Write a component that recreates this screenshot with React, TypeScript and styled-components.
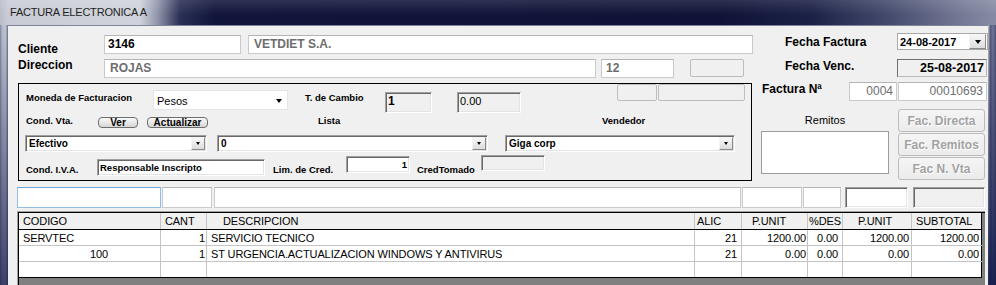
import React from 'react';
import styled, { createGlobalStyle } from 'styled-components';

const GlobalStyle = createGlobalStyle`
  html, body {
    margin: 0;
    padding: 0;
    background: #10143a;
  }
  * {
    box-sizing: border-box;
  }
`;

const Window = styled.div`
  width: 996px;
  height: 285px;
  display: flex;
  flex-direction: column;
  overflow: hidden;
  font-family: "Liberation Sans", Arial, sans-serif;
  color: #000;
`;

const TitleBar = styled.div`
  height: 25px;
  flex: none;
  display: flex;
  align-items: center;
  padding: 0 0 1px 10px;
  background:
    linear-gradient(180deg, rgba(255, 255, 255, 0.12) 0, rgba(255, 255, 255, 0) 60%),
    linear-gradient(90deg, #b9bdc9 0, #c9ccd5 8px, #d0d3db 140px, #8e93a9 158px, #2a2f55 180px,
      #11153b 215px, #0f1337 720px, #1b2046 810px, #454b6d 890px, #737994 960px, #868ca4 996px);
`;

const Title = styled.span`
  font-size: 11px;
  letter-spacing: -0.2px;
  color: #1e1e1e;
`;

const Frame = styled.div`
  flex: 1;
  display: flex;
  min-height: 0;
`;

const Edge = styled.div<{ $side: 'left' | 'right' }>`
  width: 8px;
  flex: none;
  background: ${p => p.$side === 'left'
    ? `linear-gradient(180deg, rgba(16, 22, 70, 0) 0, rgba(16, 22, 70, 0.75) 100%),
       linear-gradient(90deg, #7d849f 0, #b6bac8 2px, #c3c6d1 6px, #7b809a 7px, #7b809a 8px)`
    : `linear-gradient(180deg, rgba(16, 22, 70, 0.2) 0, rgba(16, 22, 70, 0.9) 100%),
       linear-gradient(90deg, #d8d8d8 0, #d8d8d8 1px, #5f6687 2px, #8990aa 5px, #5d6384 8px)`};
`;

const Content = styled.div`
  flex: 1;
  min-width: 0;
  display: flex;
  flex-direction: column;
  background: #f0f0f0;
  border-top: 1px solid #7f849a;
`;

const Top = styled.div`
  display: flex;
  flex: none;
  height: 155px;
`;

const LeftPane = styled.div`
  width: 745px;
  flex: none;
  padding-left: 10px;
  display: flex;
  flex-direction: column;
`;

const RightPane = styled.div`
  width: 235px;
  flex: none;
  display: flex;
  flex-direction: column;
`;

const Row = styled.div<{ $mt?: number; $h: number; $pl?: number }>`
  display: flex;
  align-items: flex-start;
  flex: none;
  height: ${p => p.$h}px;
  margin-top: ${p => p.$mt ?? 0}px;
  padding-left: ${p => p.$pl ?? 0}px;
`;

const Label = styled.div<{ $w?: number; $top?: number; $ml?: number; $small?: boolean }>`
  flex: none;
  width: ${p => (p.$w ? `${p.$w}px` : 'auto')};
  margin-top: ${p => p.$top ?? 0}px;
  margin-left: ${p => p.$ml ?? 0}px;
  font-size: ${p => (p.$small ? 9.5 : 12)}px;
  font-weight: bold;
  line-height: ${p => (p.$small ? 12 : 14)}px;
  white-space: nowrap;
`;

const TextBox = styled.div<{
  $w: number;
  $h: number;
  $ml?: number;
  $bold?: boolean;
  $dim?: boolean;
  $right?: boolean;
  $pl?: number;
  $focus?: boolean;
}>`
  flex: none;
  width: ${p => p.$w}px;
  height: ${p => p.$h}px;
  margin-left: ${p => p.$ml ?? 0}px;
  display: flex;
  align-items: center;
  justify-content: ${p => (p.$right ? 'flex-end' : 'flex-start')};
  padding: 0 ${p => (p.$right ? 3 : 0)}px 1px ${p => p.$pl ?? 3}px;
  background: #fff;
  border: 1px solid ${p => (p.$focus ? '#8fbde6' : '#cacaca')};
  border-top-color: ${p => (p.$focus ? '#6fa6da' : '#b4b4b4')};
  font-size: 12px;
  font-weight: ${p => (p.$bold ? 'bold' : 'normal')};
  color: ${p => (p.$dim ? '#6d6d6d' : '#000')};
  white-space: nowrap;
`;

const FlatBox = styled.div<{ $w: number; $h: number; $ml?: number | 'auto'; $mr?: number; $top?: number }>`
  flex: none;
  width: ${p => p.$w}px;
  height: ${p => p.$h}px;
  margin-left: ${p => (p.$ml === 'auto' ? 'auto' : `${p.$ml ?? 0}px`)};
  margin-right: ${p => p.$mr ?? 0}px;
  margin-top: ${p => p.$top ?? 0}px;
  background: #f0f0f0;
  border: 1px solid #bdbdbd;
  border-radius: 2px;
`;

const InsetBox = styled.div<{
  $w: number;
  $h: number;
  $ml?: number;
  $top?: number;
  $white?: boolean;
  $bold?: boolean;
  $size?: number;
  $right?: boolean;
  $soft?: boolean;
}>`
  flex: none;
  width: ${p => p.$w}px;
  height: ${p => p.$h}px;
  margin-left: ${p => p.$ml ?? 0}px;
  margin-top: ${p => p.$top ?? 0}px;
  display: flex;
  align-items: ${p => (p.$soft ? 'center' : 'flex-start')};
  justify-content: ${p => (p.$right ? 'flex-end' : 'flex-start')};
  padding: ${p => (p.$soft ? 0 : 1)}px 2px 0 2px;
  background: ${p => (p.$white ? '#fff' : '#f0f0f0')};
  border-style: solid;
  border-width: 1px;
  border-color: ${p => (p.$soft ? '#6e6e6e #b9b9b9 #b9b9b9 #6e6e6e' : '#a0a0a0 #fff #fff #a0a0a0')};
  box-shadow: ${p => (p.$soft ? 'none' : 'inset 1px 1px 0 #696969, inset -1px -1px 0 #e3e3e3')};
  font-size: ${p => p.$size ?? 12}px;
  font-weight: ${p => (p.$bold ? 'bold' : 'normal')};
  line-height: 14px;
  white-space: nowrap;
`;

const Caret = styled.span<{ $size?: number }>`
  flex: none;
  width: 0;
  height: 0;
  border-left: ${p => (p.$size ?? 7) / 2}px solid transparent;
  border-right: ${p => (p.$size ?? 7) / 2}px solid transparent;
  border-top: ${p => Math.round((p.$size ?? 7) * 0.58)}px solid #000;
`;

const Select = styled.div<{ $w: number; $h: number; $top?: number }>`
  flex: none;
  width: ${p => p.$w}px;
  height: ${p => p.$h}px;
  margin-top: ${p => p.$top ?? 0}px;
  display: flex;
  align-items: center;
  justify-content: space-between;
  padding: 2px 5px 0 3px;
  background: #fff;
  border: 1px solid #e4e4e4;
  font-size: 11px;
`;

const Combo = styled.div<{ $w: number; $ml?: number; $top?: number }>`
  flex: none;
  width: ${p => p.$w}px;
  height: 17px;
  margin-left: ${p => p.$ml ?? 0}px;
  margin-top: ${p => p.$top ?? 0}px;
  display: flex;
  align-items: center;
  padding-left: 3px;
  background: #fff;
  border-style: solid;
  border-width: 1px;
  border-color: #a0a0a0 #fff #fff #a0a0a0;
  box-shadow: inset 1px 1px 0 #696969, inset -1px -1px 0 #e3e3e3;
  font-size: 10px;
  font-weight: bold;
  white-space: nowrap;
`;

const ComboText = styled.span`
  flex: 1;
`;

const ComboButton = styled.span<{ $w: number; $h: number }>`
  flex: none;
  width: ${p => p.$w}px;
  height: ${p => p.$h}px;
  margin-right: 1px;
  display: flex;
  align-items: center;
  justify-content: center;
  background: linear-gradient(#f7f7f7, #dcdcdc);
  border: 1px solid;
  border-color: #f4f4f4 #8a8a8a #8a8a8a #f4f4f4;
`;

const DateCombo = styled.div`
  flex: none;
  width: 91px;
  height: 17px;
  display: flex;
  align-items: center;
  padding-left: 2px;
  background: #fff;
  border: 1px solid #a9a9a9;
  font-size: 11px;
  font-weight: bold;
`;

const Group = styled.div`
  width: 734px;
  height: 98px;
  flex: none;
  margin-top: 5px;
  border: 1px solid #000;
  display: flex;
  flex-direction: column;
`;

const MiniButton = styled.div<{ $w: number; $ml?: number; $top?: number }>`
  flex: none;
  width: ${p => p.$w}px;
  height: 11px;
  margin-left: ${p => p.$ml ?? 0}px;
  margin-top: ${p => p.$top ?? 0}px;
  display: flex;
  align-items: center;
  justify-content: center;
  border: 1px solid #6e6e6e;
  border-radius: 4px;
  background: linear-gradient(#fafafa, #d6d6d6);
  font-size: 10px;
  font-weight: bold;
  line-height: 9px;
`;

const RemitosCol = styled.div`
  width: 128px;
  flex: none;
  display: flex;
  flex-direction: column;
`;

const RemitosLabel = styled.div`
  height: 22px;
  display: flex;
  align-items: center;
  justify-content: center;
  font-size: 11px;
`;

const RemitosBox = styled.div`
  height: 43px;
  background: #fff;
  border: 1px solid #9c9c9c;
`;

const ButtonCol = styled.div`
  width: 87px;
  flex: none;
  margin-left: 9px;
  display: flex;
  flex-direction: column;
  gap: 1px;
`;

const FacButton = styled.div`
  height: 23px;
  display: flex;
  align-items: center;
  justify-content: center;
  border: 1px solid #bcbcbc;
  border-radius: 3px;
  background: linear-gradient(#f5f5f5, #ebebeb);
  color: #a2a2a2;
  font-size: 12px;
  font-weight: bold;
  text-shadow: 1px 1px 0 #fff;
`;

const GridFrame = styled.div`
  flex: 1;
  width: 968px;
  margin: 3px 0 0 9px;
  display: flex;
  flex-direction: column;
  border-top: 1px solid #a0a0a0;
  border-left: 1px solid #a0a0a0;
`;

const GridBody = styled.div`
  flex: 1;
  background: #808080;
  border-top: 1px solid #000;
  border-left: 1px solid #000;
`;

const columns = [
  { w: 142, head: 'CODIGO', hp: 4, right: false, pr: 2 },
  { w: 46, head: 'CANT', hp: 4, right: true, pr: 1 },
  { w: 488, head: 'DESCRIPCION', hp: 16, right: false, pr: 2 },
  { w: 47, head: 'ALIC', hp: 2, right: true, pr: 4 },
  { w: 66, head: 'P.UNIT', hp: 10, right: true, pr: 1 },
  { w: 35, head: '%DES', hp: 1, right: true, pr: 4 },
  { w: 69, head: 'P.UNIT', hp: 15, right: true, pr: 2 },
  { w: 70, head: 'SUBTOTAL', hp: 4, right: true, pr: 2 },
];

const rows: { cells: string[]; indent?: number }[] = [
  { cells: ['SERVTEC', '1', 'SERVICIO TECNICO', '21', '1200.00', '0.00', '1200.00', '1200.00'] },
  { cells: ['100', '1', 'ST URGENCIA.ACTUALIZACION WINDOWS Y ANTIVIRUS', '21', '0.00', '0.00', '0.00', '0.00'], indent: 71 },
  { cells: ['', '', '', '', '', '', '', ''] },
];

const GridRow = styled.div<{ $head?: boolean; $last?: boolean }>`
  display: grid;
  grid-template-columns: ${columns.map(c => `${c.w}px`).join(' ')};
  width: max-content;
  height: ${p => (p.$head ? 17 : 16)}px;
  background: ${p => (p.$head ? '#f0f0f0' : '#fff')};
  border-bottom: 1px solid ${p => (p.$head || p.$last ? '#000' : '#c4c4c4')};
`;

const Cell = styled.div<{ $right?: boolean; $pl: number; $pr: number; $edge?: boolean }>`
  padding: 1px ${p => p.$pr}px 0 ${p => p.$pl}px;
  text-align: ${p => (p.$right ? 'right' : 'left')};
  border-right: 1px solid ${p => (p.$edge ? '#000' : '#c4c4c4')};
  font-size: 11px;
  letter-spacing: -0.1px;
  line-height: 14px;
  white-space: nowrap;
  overflow: hidden;
`;

const HeadCell = styled(Cell)`
  text-align: left;
`;

export default function App() {
  return (
    <>
      <GlobalStyle />
      <Window>
        <TitleBar>
          <Title>FACTURA ELECTRONICA A</Title>
        </TitleBar>
        <Frame>
          <Edge $side="left" />
          <Content>
            <Top>
              <LeftPane>
                <Row $mt={9} $h={19}>
                  <Label $w={86} $top={7}>Cliente</Label>
                  <TextBox $w={137} $h={19} $bold>3146</TextBox>
                  <TextBox $w={505} $h={19} $ml={7} $bold $dim $pl={5}>VETDIET S.A.</TextBox>
                </Row>
                <Row $mt={5} $h={19}>
                  <Label $w={86} $top={-1}>Direccion</Label>
                  <TextBox $w={492} $h={19} $bold $dim $pl={5}>ROJAS</TextBox>
                  <TextBox $w={73} $h={19} $ml={5} $bold $dim $pl={4}>12</TextBox>
                  <FlatBox $w={54} $h={18} $ml={16} />
                </Row>
                <Group>
                  <Row $h={30}>
                    <Label $small $ml={7} $w={127} $top={8}>Moneda de Facturacion</Label>
                    <Select $w={135} $h={20} $top={6}>
                      Pesos
                      <Caret $size={7} />
                    </Select>
                    <Label $small $ml={17} $w={80} $top={8}>T. de Cambio</Label>
                    <InsetBox $w={47} $h={21} $top={8} $bold>1</InsetBox>
                    <InsetBox $w={64} $h={21} $top={8} $ml={25} $size={11}>0.00</InsetBox>
                    <FlatBox $w={40} $h={17} $ml="auto" />
                    <FlatBox $w={87} $h={17} $ml={1} $mr={6} />
                  </Row>
                  <Row $h={18}>
                    <Label $small $ml={7} $w={72} $top={1}>Cond. Vta.</Label>
                    <MiniButton $w={40} $top={3}>Ver</MiniButton>
                    <MiniButton $w={61} $top={3} $ml={9}>Actualizar</MiniButton>
                    <Label $small $ml={110} $w={284} $top={1}>Lista</Label>
                    <Label $small $top={1}>Vendedor</Label>
                  </Row>
                  <Row $h={22}>
                    <Combo $w={182} $ml={6} $top={3}>
                      <ComboText>Efectivo</ComboText>
                      <ComboButton $w={14} $h={13}><Caret $size={5} /></ComboButton>
                    </Combo>
                    <Combo $w={271} $ml={10} $top={3}>
                      <ComboText>0</ComboText>
                      <ComboButton $w={14} $h={13}><Caret $size={5} /></ComboButton>
                    </Combo>
                    <Combo $w={230} $ml={17} $top={3}>
                      <ComboText>Giga corp</ComboText>
                      <ComboButton $w={14} $h={13}><Caret $size={5} /></ComboButton>
                    </Combo>
                  </Row>
                  <Row $h={26}>
                    <Label $small $ml={7} $w={71} $top={10}>Cond. I.V.A.</Label>
                    <InsetBox $w={168} $h={17} $top={5} $white $bold $size={9.5}>Responsable Inscripto</InsetBox>
                    <Label $small $ml={8} $w={73} $top={10}>Lim. de Cred.</Label>
                    <InsetBox $w={64} $h={17} $top={2} $white $bold $right $size={9.5}>1</InsetBox>
                    <Label $small $ml={7} $w={64} $top={10}>CredTomado</Label>
                    <InsetBox $w={64} $h={16} $top={1} />
                  </Row>
                </Group>
              </LeftPane>

              <RightPane>
                <Row $mt={7} $h={17} $pl={32}>
                  <Label $w={112} $top={2}>Fecha Factura</Label>
                  <DateCombo>
                    <ComboText>24-08-2017</ComboText>
                    <ComboButton $w={17} $h={15}><Caret $size={7} /></ComboButton>
                  </DateCombo>
                </Row>
                <Row $mt={9} $h={18} $pl={32}>
                  <Label $w={112} $top={0}>Fecha Venc.</Label>
                  <InsetBox $w={90} $h={18} $right $bold $soft $size={12.5}>25-08-2017</InsetBox>
                </Row>
                <Row $mt={5} $h={20} $pl={9}>
                  <Label $w={87} $top={0}>Factura Nª</Label>
                  <TextBox $w={48} $h={19} $right $dim>0004</TextBox>
                  <TextBox $w={89} $h={19} $ml={1} $right $dim>00010693</TextBox>
                </Row>
                <Row $mt={7} $h={71} $pl={8}>
                  <RemitosCol>
                    <RemitosLabel>Remitos</RemitosLabel>
                    <RemitosBox />
                  </RemitosCol>
                  <ButtonCol>
                    <FacButton>Fac. Directa</FacButton>
                    <FacButton>Fac. Remitos</FacButton>
                    <FacButton>Fac N. Vta</FacButton>
                  </ButtonCol>
                </Row>
              </RightPane>
            </Top>

            <Row $mt={6} $h={21} $pl={9}>
              <TextBox $w={144} $h={21} $focus />
              <TextBox $w={50} $h={21} $ml={1} />
              <TextBox $w={527} $h={21} $ml={2} />
              <TextBox $w={60} $h={21} $ml={1} />
              <TextBox $w={38} $h={21} $ml={1} />
              <InsetBox $w={63} $h={21} $ml={4} $white />
              <InsetBox $w={72} $h={21} $ml={5} />
            </Row>

            <GridFrame>
              <GridBody>
                <GridRow $head>
                  {columns.map((c, i) => (
                    <HeadCell key={i} $pl={c.hp} $pr={2} $edge={i === columns.length - 1}>
                      {c.head}
                    </HeadCell>
                  ))}
                </GridRow>
                {rows.map((r, ri) => (
                  <GridRow key={ri} $last={ri === rows.length - 1}>
                    {r.cells.map((v, ci) => (
                      <Cell
                        key={ci}
                        $right={columns[ci].right}
                        $pl={ci === 0 && r.indent ? r.indent : 4}
                        $pr={columns[ci].pr}
                        $edge={ci === columns.length - 1}
                      >
                        {v}
                      </Cell>
                    ))}
                  </GridRow>
                ))}
              </GridBody>
            </GridFrame>
          </Content>
          <Edge $side="right" />
        </Frame>
      </Window>
    </>
  );
}
